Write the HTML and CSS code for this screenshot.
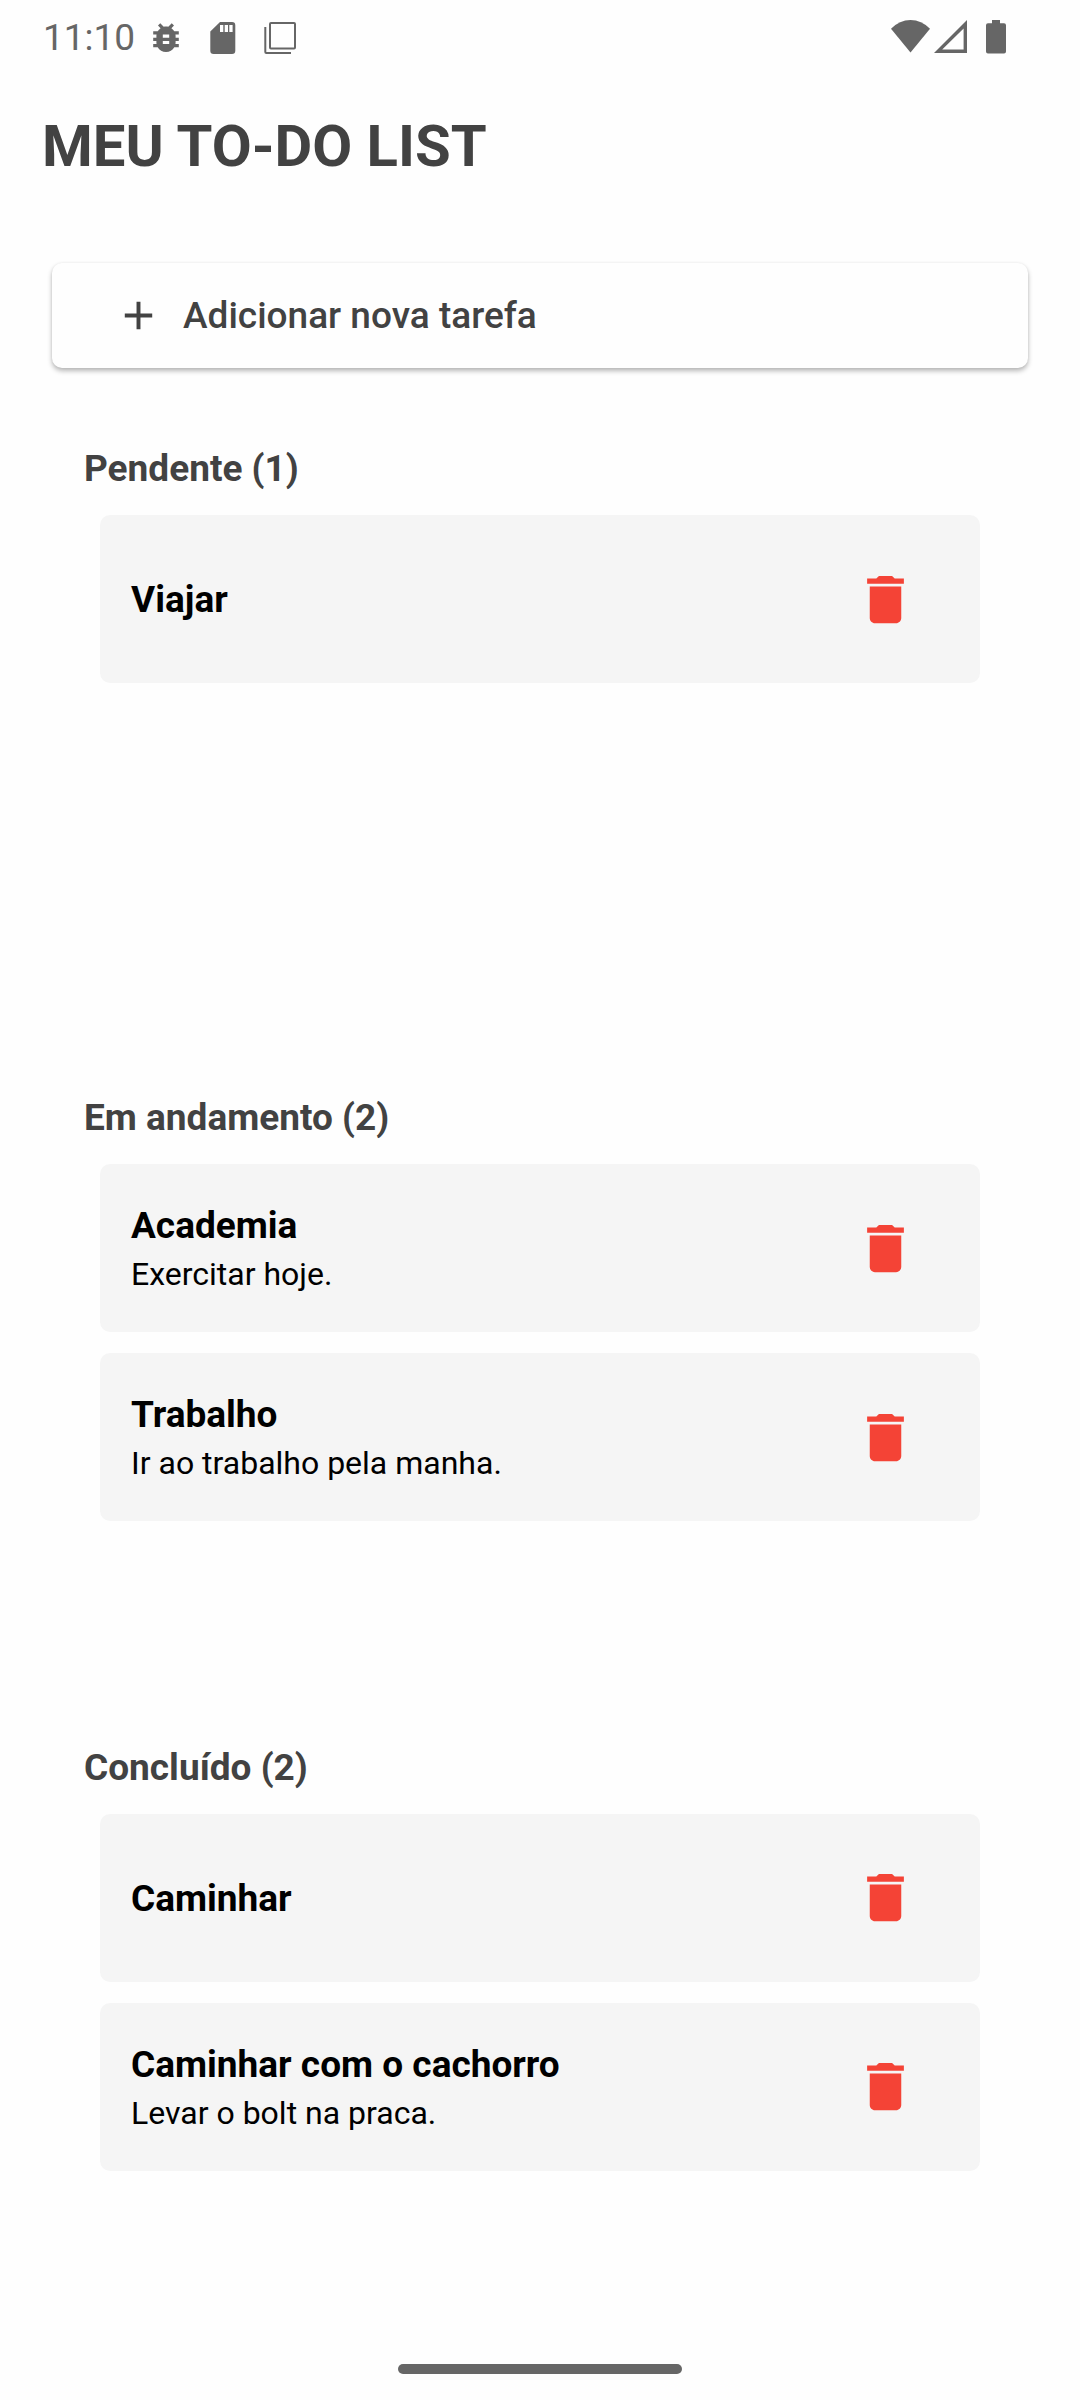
FILE: index.html
```html
<!DOCTYPE html>
<html lang="pt-BR">
<head>
  <meta charset="utf-8">
  <meta name="viewport" content="width=device-width, initial-scale=1">
  <title>Meu To-Do List</title>
  <link rel="stylesheet" href="styles.css">
</head>
<body>
  <svg class="sprite" aria-hidden="true">
    <symbol id="delete" viewBox="0 0 24 24">
      <path d="M6 19c0 1.1.9 2 2 2h8c1.1 0 2-.9 2-2V7H6v12zM19 4h-3.500l-1-1h-5l-1 1H5v2h14V4z"/>
    </symbol>
  </svg>

  <div class="status-bar">
    <div class="status-left">
      <span class="clock">11:10</span>
      <div class="notifications">
        <svg width="32" height="32" viewBox="2 2.200 20 20"><path d="M20 8h-2.810c-.45-.78-1.070-1.450-1.820-1.960L17 4.410 15.590 3l-2.170 2.170C12.960 5.060 12.490 5 12 5c-.49 0-.96.06-1.410.17L8.410 3 7 4.410l1.620 1.630C7.880 6.550 7.260 7.220 6.810 8H4v2h2.090c-.05.33-.09.66-.09 1v1H4v2h2v1c0 .34.04.67.09 1H4v2h2.810c1.040 1.790 2.970 3 5.190 3s4.150-1.210 5.190-3H20v-2h-2.090c.05-.33.09-.66.09-1v-1h2v-2h-2v-1c0-.34-.04-.67-.09-1H20V8zm-6 8h-4v-2h4v2zm0-4h-4v-2h4v2z"/></svg>
        <svg width="32" height="32" viewBox="0 0 32 32"><path fill-rule="evenodd" d="M13 0h12a3.300 3.300 0 0 1 3.300 3.300v25.400a3.300 3.300 0 0 1-3.300 3.300H6.600a3.300 3.300 0 0 1-3.300-3.300V9.500zM13 3v7h3.300V3zm4.700 0v7h3.300V3zm4.600 0v7h3.300V3z"/></svg>
        <svg width="32" height="32" viewBox="0 0 32 32"><g fill="none" stroke="currentColor" stroke-width="2"><rect x="6" y="1" width="25" height="25.500" rx="1"/><path d="M1.300 5v25q0 1 1 1H27"/></g></svg>
      </div>
    </div>
    <div class="status-right">
      <svg width="39" height="36" viewBox="0 0 39 36"><path d="M19.500 32.500L0 8.800Q8.500 0 19.500 0T39 8.800z"/></svg>
      <svg width="33" height="36" viewBox="0 0 33 36"><path fill-rule="evenodd" d="M33 0v33H0zM29.600 8.500L8.200 29.500h21.400z"/></svg>
      <svg class="battery" width="20" height="36" viewBox="0 0 20 36"><path d="M6 0h8v3.300h4a2 2 0 0 1 2 2V31.500a2 2 0 0 1-2 2H2a2 2 0 0 1-2-2V5.300a2 2 0 0 1 2-2h4z"/></svg>
    </div>
  </div>

  <header class="app-bar">
    <h1>MEU TO-DO LIST</h1>
  </header>

  <main class="board">
    <button class="add-task" type="button">
      <svg width="47" height="47" viewBox="0 0 24 24" aria-hidden="true"><path d="M19 13h-6v6h-2v-6H5v-2h6V5h2v6h6v2z"/></svg>
      Adicionar nova tarefa
    </button>

    <section class="group">
      <h2>Pendente (1)</h2>
      <ul class="tasks">
        <li class="task">
          <div class="task-text"><h3>Viajar</h3></div>
          <button class="remove" type="button" aria-label="Excluir Viajar"><svg><use href="#delete"/></svg></button>
        </li>
      </ul>
    </section>

    <section class="group">
      <h2>Em andamento (2)</h2>
      <ul class="tasks">
        <li class="task">
          <div class="task-text"><h3>Academia</h3><p>Exercitar hoje.</p></div>
          <button class="remove" type="button" aria-label="Excluir Academia"><svg><use href="#delete"/></svg></button>
        </li>
        <li class="task">
          <div class="task-text"><h3>Trabalho</h3><p>Ir ao trabalho pela manha.</p></div>
          <button class="remove" type="button" aria-label="Excluir Trabalho"><svg><use href="#delete"/></svg></button>
        </li>
      </ul>
    </section>

    <section class="group">
      <h2>Concluído (2)</h2>
      <ul class="tasks">
        <li class="task">
          <div class="task-text"><h3>Caminhar</h3></div>
          <button class="remove" type="button" aria-label="Excluir Caminhar"><svg><use href="#delete"/></svg></button>
        </li>
        <li class="task">
          <div class="task-text"><h3>Caminhar com o cachorro</h3><p>Levar o bolt na praca.</p></div>
          <button class="remove" type="button" aria-label="Excluir Caminhar com o cachorro"><svg><use href="#delete"/></svg></button>
        </li>
      </ul>
    </section>
  </main>

  <div class="home-bar"><span class="home-handle"></span></div>
</body>
</html>
```
FILE: styles.css
```css
* {
  box-sizing: border-box;
}

body {
  display: flex;
  flex-direction: column;
  min-height: 100vh;
  margin: 0;
  background: #fefefe;
  color: #424242;
  font-family: Roboto, "Liberation Sans", sans-serif;
}

h1, h2, h3, p, ul {
  margin: 0;
  padding: 0;
}

svg {
  display: block;
  flex: none;
  fill: currentColor;
}

button {
  border: 0;
  font-family: inherit;
  cursor: pointer;
}

.sprite {
  display: none;
}

/* System status bar */
.status-bar {
  display: flex;
  justify-content: space-between;
  align-items: center;
  padding: 16px 74px 0 43px;
  color: #666;
}

.status-left,
.status-right,
.notifications {
  display: flex;
  align-items: center;
}

.status-left {
  gap: 15px;
}

.status-right {
  gap: 4px;
}

.notifications {
  gap: 25px;
}

.battery {
  margin-left: 15px;
}

.clock {
  font-size: 37px;
  line-height: 44px;
}

.app-bar {
  padding: 52px 42px 0;
}

.app-bar h1 {
  font-size: 58px;
  font-weight: 700;
  line-height: 68px;
}

/* Task board */
.board {
  display: flex;
  flex: 1;
  flex-direction: column;
  padding: 83px 52px 0;
}

.add-task {
  display: flex;
  align-items: center;
  gap: 21px;
  margin-bottom: 42px;
  padding: 29px 60px;
  border-radius: 10px;
  background: #fefefe;
  box-shadow: 0 3px 5px rgba(0, 0, 0, 0.28), 0 0 3px rgba(0, 0, 0, 0.06);
  color: #424242;
  font-size: 37px;
  font-weight: 500;
  line-height: 47px;
  padding-left: 63px;
}

.group {
  flex: 1 1 0px;
  padding: 37px 48px 0;
}

.group h2 {
  margin: 0 -16px 24px;
  font-size: 37px;
  font-weight: 700;
  line-height: 44px;
}

.tasks {
  display: flex;
  flex-direction: column;
  gap: 21px;
  list-style: none;
}

.task {
  display: flex;
  justify-content: space-between;
  align-items: center;
  min-height: 168px;
  padding: 16px 63px 16px 31px;
  border-radius: 10px;
  background: #f5f5f5;
  color: #000;
}

.task-text {
  display: flex;
  flex-direction: column;
  gap: 6px;
  padding-top: 2px;
}

.task h3 {
  font-size: 37px;
  font-weight: 700;
  line-height: 44px;
}

.task p {
  font-size: 32px;
  line-height: 40px;
}

.remove {
  padding: 0;
  background: none;
  color: #f44336;
}

.remove svg {
  width: 63px;
  height: 63px;
}

/* Gesture handle */
.home-bar {
  display: flex;
  justify-content: center;
  padding: 6px 0 26px;
}

.home-handle {
  width: 284px;
  height: 10px;
  border-radius: 5px;
  background: #666;
}
```
